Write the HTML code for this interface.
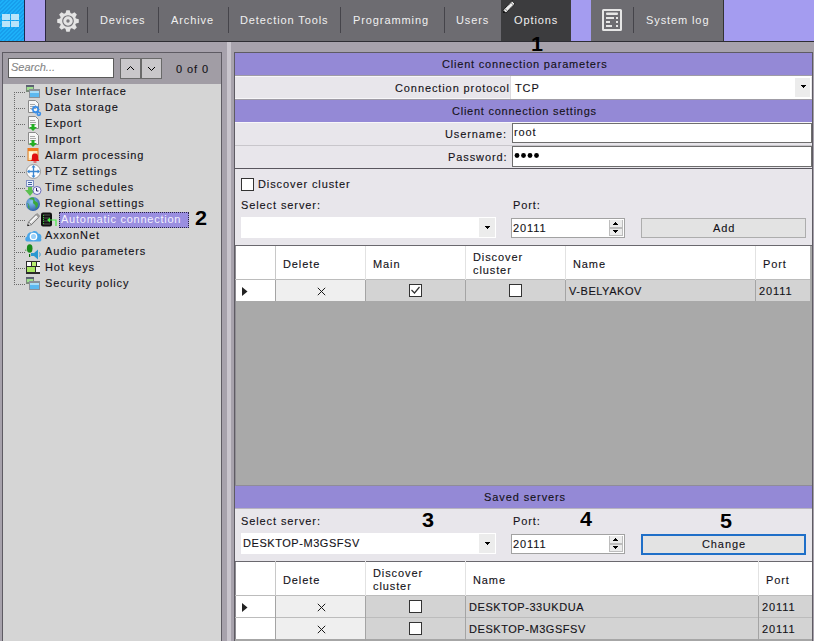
<!DOCTYPE html>
<html><head><meta charset="utf-8">
<style>
*{margin:0;padding:0;box-sizing:border-box}
html,body{width:814px;height:641px;overflow:hidden}
body{position:relative;background:#a7a2ac;font-family:"Liberation Sans",sans-serif;font-size:12px;color:#141218}
.a{position:absolute}
.t{position:absolute;white-space:nowrap;font-size:11px;line-height:14px;letter-spacing:.9px;-webkit-text-stroke:.12px currentColor}
.w{color:#f0f0f0;-webkit-text-stroke:0}
.sep{position:absolute;top:7px;width:1px;height:26px;background:#45444a}
.ph{position:absolute;left:235px;width:577px;height:23px;background:#9489d6}
.row{position:absolute;left:235px;width:577px;background:#e8e6eb}
.inp{position:absolute;background:#fff;border:1px solid #6e6e6e}
.cb{position:absolute;width:13px;height:13px;background:#fff;border:1px solid #333}
.num{position:absolute;font-weight:bold;font-size:20px;line-height:20px;color:#000;transform:scaleX(1.08);transform-origin:0 0}
</style></head><body>

<!-- TOP BAR -->
<div class="a" style="left:0;top:0;width:814px;height:41px;background:#6d6c71"></div>
<div class="a" style="left:0;top:41px;width:814px;height:1px;background:#2e2d33"></div>
<div class="a" style="left:0;top:0;width:24px;height:41px;background:repeating-linear-gradient(-45deg,#1cb0f8 0,#1cb0f8 2px,#179eec 2px,#179eec 2.83px)"></div>
<div class="a" style="left:24px;top:0;width:1px;height:41px;background:#1e2a50"></div>
<div class="a" style="left:25px;top:0;width:20px;height:41px;background:#ab9fec"></div>
<div class="a" style="left:45px;top:0;width:1px;height:41px;background:#2a2840"></div>
<div class="a" style="left:501px;top:0;width:70px;height:41px;background:#3c3c3e"></div>
<div class="a" style="left:571px;top:0;width:20px;height:41px;background:#a49cf0"></div>
<div class="a" style="left:723px;top:0;width:1px;height:41px;background:#333"></div>
<div class="a" style="left:724px;top:0;width:90px;height:41px;background:#a49cf0"></div>

<div class="t w" style="left:100px;top:13px">Devices</div>
<div class="sep" style="left:87px"></div>
<div class="sep" style="left:158px"></div>
<div class="t w" style="left:171px;top:13px">Archive</div>
<div class="sep" style="left:228px"></div>
<div class="t w" style="left:240px;top:13px">Detection Tools</div>
<div class="sep" style="left:340px"></div>
<div class="t w" style="left:353px;top:13px">Programming</div>
<div class="sep" style="left:444px"></div>
<div class="t w" style="left:456px;top:13px">Users</div>
<div class="t w" style="left:514px;top:13px">Options</div>
<div class="sep" style="left:633px"></div>
<div class="t w" style="left:646px;top:13px">System log</div>
<div class="num" style="left:531px;top:34px">1</div>

<!-- LEFT PANEL -->
<div class="a" style="left:2px;top:52px;width:220px;height:600px;border:1px solid #5e5b63;background:#d5d5d5"></div>
<div class="a" style="left:3px;top:53px;width:218px;height:31px;background:#a19da5"></div>
<div class="inp" style="left:8px;top:58px;width:106px;height:20px;border-color:#5a5a5a"></div>
<div class="t" style="left:11px;top:60px;font-style:italic;color:#858585;font-size:11px;letter-spacing:0">Search...</div>
<div class="a" style="left:120px;top:58px;width:21px;height:21px;background:#c9c7ca;border:1px solid #6a6a6a"></div>
<div class="a" style="left:141px;top:58px;width:21px;height:21px;background:#c9c7ca;border:1px solid #6a6a6a"></div>
<div class="t" style="left:176px;top:62px">0 of 0</div>

<!-- tree text -->
<div class="t" style="left:45px;top:84px;letter-spacing:.9px">User Interface</div>
<div class="t" style="left:45px;top:100px;letter-spacing:.9px">Data storage</div>
<div class="t" style="left:45px;top:116px;letter-spacing:.9px">Export</div>
<div class="t" style="left:45px;top:132px;letter-spacing:.9px">Import</div>
<div class="t" style="left:45px;top:148px;letter-spacing:.9px">Alarm processing</div>
<div class="t" style="left:45px;top:164px;letter-spacing:.9px">PTZ settings</div>
<div class="t" style="left:45px;top:180px;letter-spacing:.9px">Time schedules</div>
<div class="t" style="left:45px;top:196px;letter-spacing:.9px">Regional settings</div>
<div class="a" style="left:59px;top:212px;width:130px;height:16px;background:#9a8fe0;border:1px dotted #2a2640"></div>
<div class="t" style="left:61px;top:212px;color:#f4f2ff;letter-spacing:.75px;-webkit-text-stroke:0">Automatic connection</div>
<div class="num" style="left:195px;top:208px">2</div>
<div class="t" style="left:45px;top:228px;letter-spacing:.9px">AxxonNet</div>
<div class="t" style="left:45px;top:244px;letter-spacing:.9px">Audio parameters</div>
<div class="t" style="left:45px;top:260px;letter-spacing:.9px">Hot keys</div>
<div class="t" style="left:45px;top:276px;letter-spacing:.9px">Security policy</div>

<!-- SPLITTER -->
<div class="a" style="left:227px;top:42px;width:4px;height:600px;background:#c9c5cd"></div>

<!-- RIGHT PANEL -->
<div class="a" style="left:234px;top:52px;width:579px;height:600px;border:1px solid #5e5b63;background:#a9a9a9"></div>


<!-- header 1 -->
<div class="ph" style="top:53px;height:22px"></div>
<div class="a" style="left:235px;top:75px;width:577px;height:1px;background:#9f9ca6"></div>
<div class="t" style="left:442px;top:57px;letter-spacing:.8px">Client connection parameters</div>
<div class="row" style="top:76px;height:23px;border-top:1px solid #f7f6f9;border-bottom:1px solid #f7f6f9"></div>
<div class="t" style="left:395px;top:81px">Connection protocol</div>
<div class="a" style="left:511px;top:76px;width:300px;height:23px;background:#fff"></div>
<div class="a" style="left:510px;top:76px;width:1px;height:23px;background:#dcdade"></div>
<div class="t" style="left:515px;top:81px">TCP</div>
<div class="a" style="left:795px;top:78px;width:15px;height:19px;background:#ececec"></div>
<svg class="a" style="left:801px;top:85px" width="5" height="3" shape-rendering="crispEdges"><rect x="0" y="0" width="5" height="1" fill="#000"/><rect x="1" y="1" width="3" height="1" fill="#000"/><rect x="2" y="2" width="1" height="1" fill="#000"/></svg>
<div class="a" style="left:235px;top:99px;width:577px;height:1px;background:#9f9ca6"></div>
<!-- header 2 -->
<div class="ph" style="top:100px;height:22px"></div>
<div class="t" style="left:452px;top:104px;letter-spacing:.75px">Client connection settings</div>
<div class="row" style="top:122px;height:46px;border-top:1px solid #f7f6f9"></div>
<div class="a" style="left:235px;top:145px;width:577px;height:1px;background:#c8c6cb"></div>
<div class="t" style="left:445px;top:127px">Username:</div>
<div class="t" style="left:448px;top:150px">Password:</div>
<div class="inp" style="left:512px;top:123px;width:300px;height:20px"></div>
<div class="inp" style="left:512px;top:146px;width:300px;height:21px"></div>
<div class="t" style="left:514px;top:125px">root</div>
<svg class="a" style="left:514px;top:152px" width="30" height="8"><g fill="#000"><circle cx="3" cy="3.5" r="2.4"/><circle cx="9.5" cy="3.5" r="2.4"/><circle cx="16" cy="3.5" r="2.4"/><circle cx="22.5" cy="3.5" r="2.4"/></g></svg>
<!-- discover section -->
<div class="a" style="left:235px;top:168px;width:577px;height:1px;background:#59565e"></div>
<div class="row" style="top:169px;height:76px"></div>
<div class="cb" style="left:241px;top:178px"></div>
<div class="t" style="left:258px;top:177px">Discover cluster</div>
<div class="t" style="left:241px;top:198px">Select server:</div>
<div class="t" style="left:513px;top:198px">Port:</div>
<div class="a" style="left:241px;top:217px;width:255px;height:21px;background:#fff"></div>
<div class="a" style="left:479px;top:218px;width:16px;height:19px;background:#ececec"></div>
<svg class="a" style="left:485px;top:226px" width="5" height="3" shape-rendering="crispEdges"><rect x="0" y="0" width="5" height="1" fill="#000"/><rect x="1" y="1" width="3" height="1" fill="#000"/><rect x="2" y="2" width="1" height="1" fill="#000"/></svg>
<div class="inp" style="left:511px;top:218px;width:114px;height:20px;border-color:#a2a2a2"></div>
<div class="t" style="left:513px;top:221px">20111</div>
<div class="a" style="left:641px;top:218px;width:165px;height:20px;background:#e3e3e3;border:1px solid #adadad"></div>
<div class="t" style="left:713px;top:221px">Add</div>
<div class="a" style="left:235px;top:245px;width:577px;height:1px;background:#6a686e"></div><div class="a" style="left:235px;top:246px;width:1px;height:240px;background:#8e8c92"></div>
<!-- grid 1 -->
<div class="a" style="left:236px;top:246px;width:574px;height:33px;background:#fff"></div>
<div class="a" style="left:235px;top:279px;width:575px;height:1px;background:#bcbcbc"></div>
<div class="a" style="left:236px;top:280px;width:39px;height:21px;background:#fff"></div>
<div class="a" style="left:276px;top:280px;width:89px;height:21px;background:#efefef"></div>
<div class="a" style="left:366px;top:280px;width:444px;height:21px;background:#d3d3d3"></div>

<!-- grid1 headers -->
<div class="a" style="left:275px;top:246px;width:1px;height:55px;background:#c8c8c8"></div>
<div class="a" style="left:365px;top:246px;width:1px;height:55px;background:#e2e2e2"></div>
<div class="a" style="left:465px;top:246px;width:1px;height:55px;background:#e2e2e2"></div>
<div class="a" style="left:565px;top:246px;width:1px;height:55px;background:#e2e2e2"></div>
<div class="a" style="left:755px;top:246px;width:1px;height:55px;background:#e2e2e2"></div>
<div class="t" style="left:283px;top:257px">Delete</div>
<div class="t" style="left:373px;top:257px">Main</div>
<div class="t" style="left:473px;top:251px;line-height:13px">Discover<br>cluster</div>
<div class="t" style="left:573px;top:257px">Name</div>
<div class="t" style="left:763px;top:257px">Port</div>
<svg class="a" style="left:242px;top:287px" width="6" height="10"><path d="M0 0L5.5 4.5L0 9z" fill="#222"/></svg>
<svg class="a" style="left:317px;top:287px" width="9" height="9"><path d="M.8 .8l7.4 7.4M8.2 .8l-7.4 7.4" stroke="#1a1a1a" stroke-width="1"/></svg>
<div class="cb" style="left:409px;top:284px"></div>
<div class="cb" style="left:509px;top:284px"></div>
<div class="t" style="left:569px;top:284px;letter-spacing:.55px">V-BELYAKOV</div>
<div class="t" style="left:759px;top:284px">20111</div>

<!-- saved servers -->
<div class="ph" style="top:486px;height:22px"></div>
<div class="a" style="left:235px;top:485px;width:577px;height:1px;background:#8f8c98"></div>
<div class="t" style="left:484px;top:490px">Saved servers</div>
<div class="row" style="top:508px;height:53px"></div>
<div class="a" style="left:235px;top:508px;width:577px;height:1px;background:#b8b4c0"></div>
<div class="t" style="left:241px;top:514px">Select server:</div>
<div class="num" style="left:422px;top:510px">3</div>
<div class="t" style="left:513px;top:514px">Port:</div>
<div class="num" style="left:580px;top:509px">4</div>
<div class="num" style="left:720px;top:511px">5</div>
<div class="a" style="left:241px;top:533px;width:255px;height:21px;background:#fff"></div>
<div class="t" style="left:243px;top:536px;letter-spacing:.55px">DESKTOP-M3GSFSV</div>
<div class="a" style="left:479px;top:534px;width:16px;height:19px;background:#ececec"></div>
<svg class="a" style="left:485px;top:542px" width="5" height="3" shape-rendering="crispEdges"><rect x="0" y="0" width="5" height="1" fill="#000"/><rect x="1" y="1" width="3" height="1" fill="#000"/><rect x="2" y="2" width="1" height="1" fill="#000"/></svg>
<div class="inp" style="left:511px;top:534px;width:114px;height:20px;border-color:#a2a2a2"></div>
<div class="t" style="left:513px;top:537px">20111</div>
<div class="a" style="left:641px;top:534px;width:165px;height:21px;background:#e3e3e3;border:2px solid #1f6fc8"></div>
<div class="t" style="left:702px;top:537px">Change</div>
<div class="a" style="left:235px;top:561px;width:577px;height:1px;background:#6a686e"></div><div class="a" style="left:235px;top:562px;width:1px;height:80px;background:#8e8c92"></div>
<!-- grid 2 -->
<div class="a" style="left:236px;top:562px;width:576px;height:34px;background:#fff"></div>
<div class="a" style="left:235px;top:595px;width:577px;height:1px;background:#bcbcbc"></div>
<div class="a" style="left:236px;top:596px;width:39px;height:45px;background:#fff"></div>
<div class="a" style="left:276px;top:596px;width:89px;height:45px;background:#efefef"></div>
<div class="a" style="left:366px;top:596px;width:446px;height:45px;background:#d3d3d3"></div>
<div class="a" style="left:235px;top:617px;width:577px;height:1px;background:#bcbcbc"></div>
<div class="a" style="left:275px;top:561px;width:1px;height:80px;background:#c8c8c8"></div>
<div class="a" style="left:365px;top:561px;width:1px;height:80px;background:#e2e2e2"></div>
<div class="a" style="left:465px;top:561px;width:1px;height:80px;background:#e2e2e2"></div>
<div class="a" style="left:758px;top:561px;width:1px;height:80px;background:#e2e2e2"></div>
<div class="a" style="left:235px;top:639px;width:577px;height:2px;background:#a6a6a6"></div><div class="t" style="left:283px;top:573px">Delete</div>
<div class="t" style="left:373px;top:567px;line-height:13px">Discover<br>cluster</div>
<div class="t" style="left:473px;top:573px">Name</div>
<div class="t" style="left:766px;top:573px">Port</div>
<svg class="a" style="left:242px;top:603px" width="6" height="10"><path d="M0 0L5.5 4.5L0 9z" fill="#222"/></svg>
<svg class="a" style="left:317px;top:603px" width="9" height="9"><path d="M.8 .8l7.4 7.4M8.2 .8l-7.4 7.4" stroke="#1a1a1a" stroke-width="1"/></svg>
<svg class="a" style="left:317px;top:625px" width="9" height="9"><path d="M.8 .8l7.4 7.4M8.2 .8l-7.4 7.4" stroke="#1a1a1a" stroke-width="1"/></svg>
<div class="cb" style="left:409px;top:600px"></div>
<div class="cb" style="left:409px;top:622px"></div>
<div class="t" style="left:469px;top:600px;letter-spacing:.55px">DESKTOP-33UKDUA</div>
<div class="t" style="left:469px;top:622px;letter-spacing:.55px">DESKTOP-M3GSFSV</div>
<div class="t" style="left:762px;top:600px">20111</div>
<div class="t" style="left:762px;top:622px">20111</div>
<div class="a" style="left:275px;top:280px;width:1px;height:21px;background:#a4a4a4"></div><div class="a" style="left:365px;top:280px;width:1px;height:21px;background:#a4a4a4"></div><div class="a" style="left:465px;top:280px;width:1px;height:21px;background:#a4a4a4"></div><div class="a" style="left:565px;top:280px;width:1px;height:21px;background:#a4a4a4"></div><div class="a" style="left:755px;top:280px;width:1px;height:21px;background:#a4a4a4"></div><div class="a" style="left:275px;top:596px;width:1px;height:45px;background:#a4a4a4"></div><div class="a" style="left:365px;top:596px;width:1px;height:45px;background:#a4a4a4"></div><div class="a" style="left:465px;top:596px;width:1px;height:45px;background:#a4a4a4"></div><div class="a" style="left:758px;top:596px;width:1px;height:45px;background:#a4a4a4"></div>
<svg class="a" style="left:0;top:0" width="814" height="641" viewBox="0 0 814 641"><g fill="#6a6a6a"><rect x="14" y="92" width="1" height="1"/><rect x="14" y="94" width="1" height="1"/><rect x="14" y="96" width="1" height="1"/><rect x="14" y="98" width="1" height="1"/><rect x="14" y="100" width="1" height="1"/><rect x="14" y="102" width="1" height="1"/><rect x="14" y="104" width="1" height="1"/><rect x="14" y="106" width="1" height="1"/><rect x="14" y="108" width="1" height="1"/><rect x="14" y="110" width="1" height="1"/><rect x="14" y="112" width="1" height="1"/><rect x="14" y="114" width="1" height="1"/><rect x="14" y="116" width="1" height="1"/><rect x="14" y="118" width="1" height="1"/><rect x="14" y="120" width="1" height="1"/><rect x="14" y="122" width="1" height="1"/><rect x="14" y="124" width="1" height="1"/><rect x="14" y="126" width="1" height="1"/><rect x="14" y="128" width="1" height="1"/><rect x="14" y="130" width="1" height="1"/><rect x="14" y="132" width="1" height="1"/><rect x="14" y="134" width="1" height="1"/><rect x="14" y="136" width="1" height="1"/><rect x="14" y="138" width="1" height="1"/><rect x="14" y="140" width="1" height="1"/><rect x="14" y="142" width="1" height="1"/><rect x="14" y="144" width="1" height="1"/><rect x="14" y="146" width="1" height="1"/><rect x="14" y="148" width="1" height="1"/><rect x="14" y="150" width="1" height="1"/><rect x="14" y="152" width="1" height="1"/><rect x="14" y="154" width="1" height="1"/><rect x="14" y="156" width="1" height="1"/><rect x="14" y="158" width="1" height="1"/><rect x="14" y="160" width="1" height="1"/><rect x="14" y="162" width="1" height="1"/><rect x="14" y="164" width="1" height="1"/><rect x="14" y="166" width="1" height="1"/><rect x="14" y="168" width="1" height="1"/><rect x="14" y="170" width="1" height="1"/><rect x="14" y="172" width="1" height="1"/><rect x="14" y="174" width="1" height="1"/><rect x="14" y="176" width="1" height="1"/><rect x="14" y="178" width="1" height="1"/><rect x="14" y="180" width="1" height="1"/><rect x="14" y="182" width="1" height="1"/><rect x="14" y="184" width="1" height="1"/><rect x="14" y="186" width="1" height="1"/><rect x="14" y="188" width="1" height="1"/><rect x="14" y="190" width="1" height="1"/><rect x="14" y="192" width="1" height="1"/><rect x="14" y="194" width="1" height="1"/><rect x="14" y="196" width="1" height="1"/><rect x="14" y="198" width="1" height="1"/><rect x="14" y="200" width="1" height="1"/><rect x="14" y="202" width="1" height="1"/><rect x="14" y="204" width="1" height="1"/><rect x="14" y="206" width="1" height="1"/><rect x="14" y="208" width="1" height="1"/><rect x="14" y="210" width="1" height="1"/><rect x="14" y="212" width="1" height="1"/><rect x="14" y="214" width="1" height="1"/><rect x="14" y="216" width="1" height="1"/><rect x="14" y="218" width="1" height="1"/><rect x="14" y="220" width="1" height="1"/><rect x="14" y="222" width="1" height="1"/><rect x="14" y="224" width="1" height="1"/><rect x="14" y="226" width="1" height="1"/><rect x="14" y="228" width="1" height="1"/><rect x="14" y="230" width="1" height="1"/><rect x="14" y="232" width="1" height="1"/><rect x="14" y="234" width="1" height="1"/><rect x="14" y="236" width="1" height="1"/><rect x="14" y="238" width="1" height="1"/><rect x="14" y="240" width="1" height="1"/><rect x="14" y="242" width="1" height="1"/><rect x="14" y="244" width="1" height="1"/><rect x="14" y="246" width="1" height="1"/><rect x="14" y="248" width="1" height="1"/><rect x="14" y="250" width="1" height="1"/><rect x="14" y="252" width="1" height="1"/><rect x="14" y="254" width="1" height="1"/><rect x="14" y="256" width="1" height="1"/><rect x="14" y="258" width="1" height="1"/><rect x="14" y="260" width="1" height="1"/><rect x="14" y="262" width="1" height="1"/><rect x="14" y="264" width="1" height="1"/><rect x="14" y="266" width="1" height="1"/><rect x="14" y="268" width="1" height="1"/><rect x="14" y="270" width="1" height="1"/><rect x="14" y="272" width="1" height="1"/><rect x="14" y="274" width="1" height="1"/><rect x="14" y="276" width="1" height="1"/><rect x="14" y="278" width="1" height="1"/><rect x="14" y="280" width="1" height="1"/><rect x="14" y="282" width="1" height="1"/><rect x="14" y="284" width="1" height="1"/><rect x="16" y="92" width="1" height="1"/><rect x="18" y="92" width="1" height="1"/><rect x="20" y="92" width="1" height="1"/><rect x="22" y="92" width="1" height="1"/><rect x="24" y="92" width="1" height="1"/><rect x="16" y="108" width="1" height="1"/><rect x="18" y="108" width="1" height="1"/><rect x="20" y="108" width="1" height="1"/><rect x="22" y="108" width="1" height="1"/><rect x="24" y="108" width="1" height="1"/><rect x="16" y="124" width="1" height="1"/><rect x="18" y="124" width="1" height="1"/><rect x="20" y="124" width="1" height="1"/><rect x="22" y="124" width="1" height="1"/><rect x="24" y="124" width="1" height="1"/><rect x="16" y="140" width="1" height="1"/><rect x="18" y="140" width="1" height="1"/><rect x="20" y="140" width="1" height="1"/><rect x="22" y="140" width="1" height="1"/><rect x="24" y="140" width="1" height="1"/><rect x="16" y="156" width="1" height="1"/><rect x="18" y="156" width="1" height="1"/><rect x="20" y="156" width="1" height="1"/><rect x="22" y="156" width="1" height="1"/><rect x="24" y="156" width="1" height="1"/><rect x="16" y="172" width="1" height="1"/><rect x="18" y="172" width="1" height="1"/><rect x="20" y="172" width="1" height="1"/><rect x="22" y="172" width="1" height="1"/><rect x="24" y="172" width="1" height="1"/><rect x="16" y="188" width="1" height="1"/><rect x="18" y="188" width="1" height="1"/><rect x="20" y="188" width="1" height="1"/><rect x="22" y="188" width="1" height="1"/><rect x="24" y="188" width="1" height="1"/><rect x="16" y="204" width="1" height="1"/><rect x="18" y="204" width="1" height="1"/><rect x="20" y="204" width="1" height="1"/><rect x="22" y="204" width="1" height="1"/><rect x="24" y="204" width="1" height="1"/><rect x="16" y="220" width="1" height="1"/><rect x="18" y="220" width="1" height="1"/><rect x="20" y="220" width="1" height="1"/><rect x="22" y="220" width="1" height="1"/><rect x="24" y="220" width="1" height="1"/><rect x="16" y="236" width="1" height="1"/><rect x="18" y="236" width="1" height="1"/><rect x="20" y="236" width="1" height="1"/><rect x="22" y="236" width="1" height="1"/><rect x="24" y="236" width="1" height="1"/><rect x="16" y="252" width="1" height="1"/><rect x="18" y="252" width="1" height="1"/><rect x="20" y="252" width="1" height="1"/><rect x="22" y="252" width="1" height="1"/><rect x="24" y="252" width="1" height="1"/><rect x="16" y="268" width="1" height="1"/><rect x="18" y="268" width="1" height="1"/><rect x="20" y="268" width="1" height="1"/><rect x="22" y="268" width="1" height="1"/><rect x="24" y="268" width="1" height="1"/><rect x="16" y="284" width="1" height="1"/><rect x="18" y="284" width="1" height="1"/><rect x="20" y="284" width="1" height="1"/><rect x="22" y="284" width="1" height="1"/><rect x="24" y="284" width="1" height="1"/></g><g>
<rect x="26" y="85" width="8" height="7" fill="#7a8a7a"/><rect x="26" y="85" width="8" height="2" fill="#5c6272"/><rect x="27" y="87" width="6" height="3" fill="#9ee08e"/>
<rect x="29" y="89" width="11" height="9" fill="#8a9098"/><rect x="30" y="91" width="9" height="6" fill="#5cb8f0"/><rect x="30" y="91" width="9" height="2" fill="#a8dcf8"/>
</g><path d="M28.5 100.5h7l3 3v9h-10z" fill="#f6f6f6" stroke="#8a8a8a"/><path d="M30 104.5h5M30 106.5h6M30 108.5h6" stroke="#a8a8a8"/><g fill="none" stroke="#3a8ee8" stroke-width="1.6"><circle cx="35.5" cy="109.5" r="2.6"/><circle cx="38.8" cy="113.8" r="1.6"/></g><g stroke="#3a8ee8" stroke-width="1.2"><path d="M35.5 105.5v1.5M35.5 112v1.5M31.5 109.5h1.5M38 109.5h1.5M32.7 106.7l1 1M37.3 111.3l1 1M32.7 112.3l1-1M37.3 107.7l1-1"/></g><path d="M28.5 116.5h7l3 3v9h-10z" fill="#f6f6f6" stroke="#8a8a8a"/><path d="M30 120.5h5M30 122.5h6M30 124.5h6" stroke="#a8a8a8"/><path d="M31.5 124h3v3h2.5l-4 4l-4-4h2.5z" fill="#22b022"/><path d="M28.5 132.5h7l3 3v9h-10z" fill="#f6f6f6" stroke="#8a8a8a"/><path d="M30 136.5h5M30 138.5h6M30 140.5h6" stroke="#a8a8a8"/><path d="M31.5 140h3v3h2.5l-4 4l-4-4h2.5z" fill="#22b022"/><rect x="28" y="148.5" width="10" height="12" fill="#fbe6b8" stroke="#e07a20"/><rect x="28" y="148" width="10" height="3" fill="#ee7a1e"/><rect x="29" y="152" width="4" height="6" fill="#fff6dc"/><path d="M34.5 153.5c-2 0-2.6 1.6-2.6 3.5v2.3l-1.3 1.7h8.8l-1.3-1.7v-2.3c0-1.9-.6-3.5-2.6-3.5z" fill="#e01010"/><rect x="33.5" y="161.5" width="3" height="1" fill="#e01010"/><circle cx="33.5" cy="171.5" r="7" fill="#fdfdfd" stroke="#9a9a9a"/><g stroke="#3a86d0" stroke-width="1.3"><path d="M33.5 166v11M28 171.5h11"/></g><g fill="#3a86d0"><path d="M33.5 165l-2 2.5h4z"/><path d="M33.5 178l-2-2.5h4z"/><path d="M27 171.5l2.5-2v4z"/><path d="M40 171.5l-2.5-2v4z"/></g><rect x="26.5" y="180.5" width="7" height="6" fill="#e8f0ff" stroke="#8090c0"/><path d="M28 182.5h4M28 184.5h4" stroke="#4060a0"/><path d="M28 187h4v3h3l-5 6l-5-6h3z" fill="#5cc050"/><circle cx="37" cy="190.5" r="4" fill="#f4f4ff" stroke="#6a6ab8"/><path d="M36.5 188v3h2" fill="none" stroke="#202060"/><defs><radialGradient id="gl" cx=".4" cy=".35" r=".7"><stop offset="0" stop-color="#8cc8f0"/><stop offset="1" stop-color="#2a5aa8"/></radialGradient></defs><circle cx="33" cy="204" r="7" fill="url(#gl)"/><path d="M29 199c2 1 3 0 4 1s-1 3 1 4 2 3 1 5c2-1 3-3 3-5s-2-2-3-3 0-2-1-3c-2-1-4 0-5 1zM27 203c1 1 2 2 1 4l2 3c-1-2 0-3-1-5s-1-2-2-2z" fill="#3aa83a"/><g transform="translate(33.5 219.8) rotate(-45)"><rect x="-5" y="-2" width="11" height="4" fill="#dcdcdc" stroke="#6a6a6a" stroke-width=".9"/><rect x="-5" y="-1" width="11" height="1.2" fill="#fafafa"/><rect x="5" y="-2" width="2.5" height="4" fill="#9a9a9a"/><path d="M-5 -2l-3.5 2l3.5 2z" fill="#f0f0f0" stroke="#6a6a6a" stroke-width=".7"/><path d="M-8.6 0l1.6-1v2z" fill="#000"/></g><rect x="41" y="212.5" width="11" height="14" rx="2" fill="#111"/><path d="M43 215h7M43 218h7M43 221h7M43 224h7" stroke="#555"/><path d="M43.5 215v10" stroke="#3c3" stroke-dasharray="1 1"/><path d="M56 226v-6h-7" fill="none" stroke="#4e4" stroke-width="1.2"/><path d="M47 220l3-2.5v5z" fill="#4e4"/><path d="M27 241.5c-2 0-2.5-4 0-5c0-3 3-5 5-4c1-2 5-2 6 1c3 0 4 3 3 5c1 1 0 3-1 3z" fill="#4aa6e8"/><circle cx="33.5" cy="236.5" r="3.2" fill="#9ad0f8" stroke="#fff" stroke-width="1.3"/><ellipse cx="29.7" cy="248.5" rx="2.8" ry="4.2" fill="#1a8a1a"/><rect x="29" y="254" width="1.2" height="3" fill="#0a6a0a"/><path d="M25.8 249.5v1.5" stroke="#2a8a2a" stroke-width=".8"/><path d="M31 253h3l4-3.5v10l-4-3.5h-3z" fill="#2a98d0"/><path d="M39.5 252.5c.8 1 .8 3 0 4" fill="none" stroke="#2a98d0"/><rect x="26" y="261" width="14" height="13" fill="#2a2a2a"/><rect x="27" y="262" width="4" height="4" fill="#fafafa"/><rect x="32" y="262" width="4" height="4" fill="#b8f070"/><rect x="37" y="262" width="3" height="4" fill="#fafafa"/><rect x="27" y="267" width="8" height="5" fill="#a8e860"/><rect x="36" y="267" width="4" height="5" fill="#f4f4f4"/><g>
<rect x="26" y="277" width="8" height="7" fill="#7a8a7a"/><rect x="26" y="277" width="8" height="2" fill="#5c6272"/><rect x="27" y="279" width="6" height="3" fill="#9ee08e"/>
<rect x="29" y="281" width="11" height="9" fill="#8a9098"/><rect x="30" y="283" width="9" height="6" fill="#5cb8f0"/><rect x="30" y="283" width="9" height="2" fill="#a8dcf8"/>
</g><g fill="#b8e4fa"><rect x="2" y="14" width="8" height="6"/><rect x="11" y="14" width="8" height="6"/><rect x="2" y="21" width="8" height="6"/><rect x="11" y="21" width="8" height="6"/></g><g fill="#e4e4e4"><path d="M65.3 14L66.3 10.2H69.7L70.7 14z" transform="rotate(0 68 21)"/><path d="M65.3 14L66.3 10.2H69.7L70.7 14z" transform="rotate(45 68 21)"/><path d="M65.3 14L66.3 10.2H69.7L70.7 14z" transform="rotate(90 68 21)"/><path d="M65.3 14L66.3 10.2H69.7L70.7 14z" transform="rotate(135 68 21)"/><path d="M65.3 14L66.3 10.2H69.7L70.7 14z" transform="rotate(180 68 21)"/><path d="M65.3 14L66.3 10.2H69.7L70.7 14z" transform="rotate(225 68 21)"/><path d="M65.3 14L66.3 10.2H69.7L70.7 14z" transform="rotate(270 68 21)"/><path d="M65.3 14L66.3 10.2H69.7L70.7 14z" transform="rotate(315 68 21)"/><circle cx="68" cy="21" r="8.2"/></g><circle cx="68" cy="21" r="5.3" fill="none" stroke="#737277" stroke-width="1.1"/><circle cx="68" cy="21" r="1.7" fill="#7a797d"/><g transform="translate(509 7) rotate(-45)"><rect x="-6.5" y="-2" width="13" height="4" fill="#eee" stroke="#111" stroke-width="1" stroke-dasharray="1 .6"/><path d="M-6.5 -1.5l-2 1.5l2 1.5z" fill="#111"/><path d="M-4 -2v4M4.5 -2v4" stroke="#555" stroke-width=".7"/></g><rect x="603" y="10" width="18" height="20" fill="none" stroke="#e6e6e6" stroke-width="2" rx=".5"/><rect x="606" y="12.5" width="12" height="2.5" rx="1" fill="#e6e6e6"/><g fill="#e6e6e6"><rect x="606" y="17" width="8" height="2"/><rect x="616" y="17" width="2" height="2"/><rect x="606" y="21" width="4" height="2"/><rect x="616" y="21" width="2" height="2"/><rect x="606" y="25" width="6" height="2"/><rect x="616" y="25" width="2" height="2"/></g><path d="M127 70l3.5-3.5l3.5 3.5M148 67l3.5 3.5l3.5-3.5" fill="none" stroke="#000" stroke-width="1"/><path d="M411.5 290l3 3l5-6" fill="none" stroke="#333" stroke-width="1.2"/><g shape-rendering="crispEdges"><rect x="609" y="220" width="14" height="16" fill="#bdbdbd"/><rect x="610" y="220" width="12" height="7" fill="#ececec"/><rect x="610" y="229" width="12" height="6" fill="#ececec"/><g fill="#000"><rect x="613" y="224" width="5" height="1"/><rect x="614" y="223" width="3" height="1"/><rect x="615" y="222" width="1" height="1"/><rect x="613" y="230" width="5" height="1"/><rect x="614" y="231" width="3" height="1"/><rect x="615" y="232" width="1" height="1"/></g></g><g shape-rendering="crispEdges"><rect x="609" y="536" width="14" height="16" fill="#bdbdbd"/><rect x="610" y="536" width="12" height="7" fill="#ececec"/><rect x="610" y="545" width="12" height="6" fill="#ececec"/><g fill="#000"><rect x="613" y="540" width="5" height="1"/><rect x="614" y="539" width="3" height="1"/><rect x="615" y="538" width="1" height="1"/><rect x="613" y="546" width="5" height="1"/><rect x="614" y="547" width="3" height="1"/><rect x="615" y="548" width="1" height="1"/></g></g></svg>
</body></html>
